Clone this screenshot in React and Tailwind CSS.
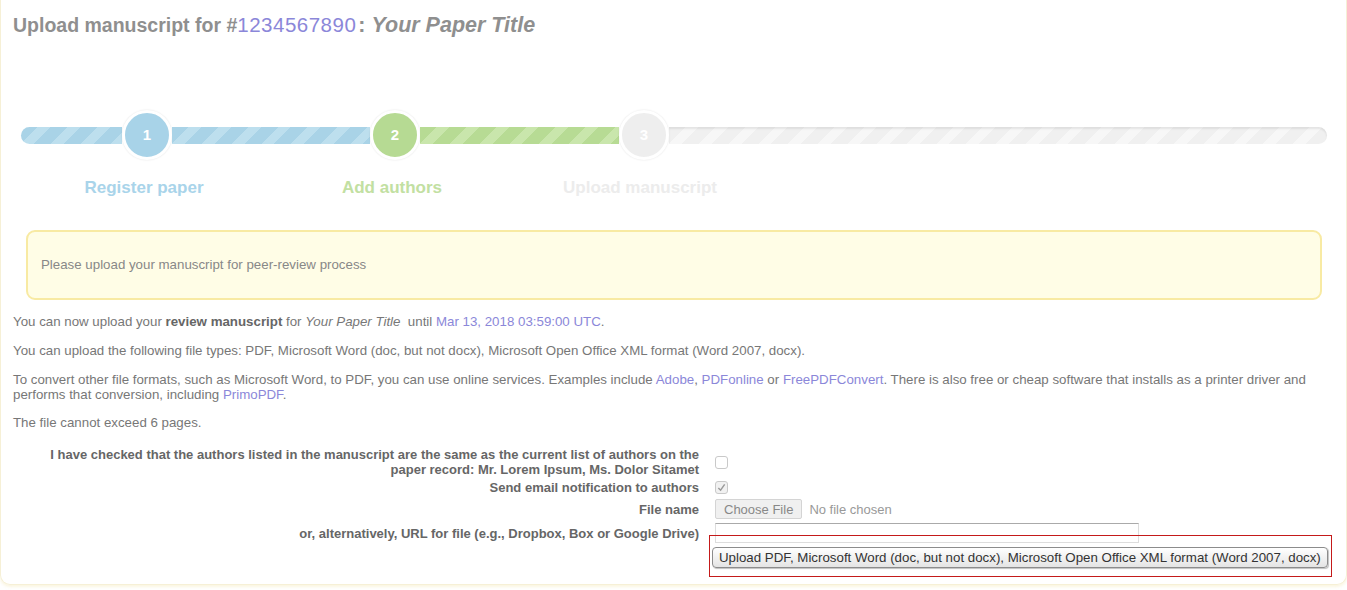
const STEPS = [
  { n: 1, label: "Register paper", circle: "bg-[#a8d3e8]", text: "text-[#a9d4ea]" },
  { n: 2, label: "Add authors", circle: "bg-[#b6da93]", text: "text-[#c2e0a2]" },
  { n: 3, label: "Upload manuscript", circle: "bg-[#eeeeee]", text: "text-[#ececec]" },
];

const BLUE = "bg-[repeating-linear-gradient(135deg,#a9d3e7_0px,#a9d3e7_12px,#bddfee_12px,#bddfee_21px)]";
const GREEN = "bg-[repeating-linear-gradient(135deg,#b7db94_0px,#b7db94_12px,#c9e6ac_12px,#c9e6ac_21px)]";
const GRAY = "bg-[repeating-linear-gradient(135deg,#f0f0f0_0px,#f0f0f0_12px,#f7f7f7_12px,#f7f7f7_21px)]";

function Circle({ step }) {
  return (
    <div className={`w-[50px] h-[50px] shrink-0 rounded-full border-[3px] border-white shadow-[0_0_2px_rgba(0,0,0,0.12)] flex items-center justify-center text-white font-bold text-[15px] ${step.circle}`}>
      {step.n}
    </div>
  );
}

function Box({ checked }) {
  return (
    <span className={`w-[13px] h-[13px] rounded-[3px] border border-[#c9c9c9] flex items-center justify-center ${checked ? "bg-[#f1f1f1]" : "bg-white"}`}>
      {checked && (
        <svg width="9" height="9" viewBox="0 0 10 10">
          <path d="M1.5 5.5 L4 8 L8.5 1.5" fill="none" stroke="#9a9a9a" strokeWidth="1.6" />
        </svg>
      )}
    </span>
  );
}

const link = "text-[#8b87d9]";

export default function App() {
  return (
    <div className="min-h-screen bg-white font-['Liberation_Sans',Arial,sans-serif] text-[#777]">
      <div className="border-x border-b border-[#f6f0d6] rounded-b-[10px] shadow-[0_2px_3px_rgba(240,225,170,0.35)] pb-[16px]">
        <h1 className="pl-[12px] pt-[13px] h-[37px] text-[19.5px] leading-[24px] font-bold text-[#8f8f8f]">
          Upload manuscript for #<span className="font-normal text-[20.5px] text-[#8b87d9] tracking-[0.5px]">1234567890</span>
          <span className="text-[21.5px]">
            <span className="ml-[2px]">:</span> <em>Your Paper Title</em>
          </span>
        </h1>

        <div className="mt-[73px] ml-[20px] mr-[19px] flex items-center">
          <div className={`w-[101px] h-[17px] rounded-l-full ${BLUE}`} />
          <Circle step={STEPS[0]} />
          <div className={`w-[198px] h-[17px] ${BLUE}`} />
          <Circle step={STEPS[1]} />
          <div className={`w-[199px] h-[17px] ${GREEN}`} />
          <Circle step={STEPS[2]} />
          <div className={`flex-1 h-[17px] rounded-r-full shadow-[inset_0_2px_2px_rgba(0,0,0,0.08)] ${GRAY}`} />
        </div>

        <div className="mt-[18px] pl-[19px] flex">
          {STEPS.map((s) => (
            <div key={s.n} className={`w-[248px] text-center font-bold text-[17px] leading-[20px] ${s.text}`}>
              {s.label}
            </div>
          ))}
        </div>

        <div className="mt-[32px] ml-[25px] mr-[24px] h-[70px] rounded-[9px] border-2 border-[#f8eaa3] bg-[#fffde6] flex items-center pl-[13px] text-[13.3px] text-[#888]">
          Please upload your manuscript for peer-review process
        </div>

        <div className="px-[12px] text-[13.3px] leading-[15px] text-[#777]">
          <p className="mt-[14px]">
            You can now upload your <b className="text-[#666]">review manuscript</b> for <i>Your Paper Title</i>&nbsp; until{" "}
            <span className={link}>Mar 13, 2018 03:59:00 UTC</span>.
          </p>
          <p className="mt-[14px]">
            You can upload the following file types: PDF, Microsoft Word (doc, but not docx), Microsoft Open Office XML format (Word 2007, docx).
          </p>
          <p className="mt-[14px] pr-[10px]">
            To convert other file formats, such as Microsoft Word, to PDF, you can use online services. Examples include{" "}
            <span className={link}>Adobe</span>, <span className={link}>PDFonline</span> or{" "}
            <span className={link}>FreePDFConvert</span>. There is also free or cheap software that installs as a printer driver and performs that conversion, including{" "}
            <span className={link}>PrimoPDF</span>.
          </p>
          <p className="mt-[13px]">The file cannot exceed 6 pages.</p>

          <div className="mt-[17px] grid grid-cols-[686px_1fr] gap-x-[16px] items-center text-[13px] leading-[15px]">
            <div className="text-right font-bold text-[#666] pl-[20px]">
              I have checked that the authors listed in the manuscript are the same as the current list of authors on the paper record: Mr. Lorem Ipsum, Ms. Dolor Sitamet
            </div>
            <div className="flex items-center"><Box /></div>

            <div className="text-right font-bold text-[#666] mt-[3px]">Send email notification to authors</div>
            <div className="flex items-center mt-[3px]"><Box checked /></div>

            <div className="text-right font-bold text-[#666] mt-[4px]">File name</div>
            <div className="flex items-center gap-[7px] mt-[4px]">
              <span className="h-[20px] px-[8px] flex items-center border border-[#d4d4d4] rounded-[2px] bg-[#f0f0f0] text-[#888]">Choose File</span>
              <span className="text-[#999]">No file chosen</span>
            </div>

            <div className="text-right font-bold text-[#666] mt-[4px]">or, alternatively, URL for file (e.g., Dropbox, Box or Google Drive)</div>
            <div className="mt-[4px]">
              <div className="w-[424px] h-[20px] border border-[#ddd] border-t-[#aaa] bg-white" />
            </div>

            <div />
            <div className="mt-[4px] -ml-[3px] relative">
              <span className="inline-flex h-[21px] items-center px-[6px] rounded-[4px] border border-[#8c8c8c] bg-[linear-gradient(#ffffff,#e4e4e4)] shadow-[1px_1px_1px_rgba(0,0,0,0.25)] text-[13.3px] text-[#333]">
                Upload PDF, Microsoft Word (doc, but not docx), Microsoft Open Office XML format (Word 2007, docx)
              </span>
              <div className="absolute left-[-3px] top-[-12px] w-[623px] h-[42px] border border-[#c41a1a] pointer-events-none" />
            </div>
          </div>
        </div>
      </div>
    </div>
  );
}
